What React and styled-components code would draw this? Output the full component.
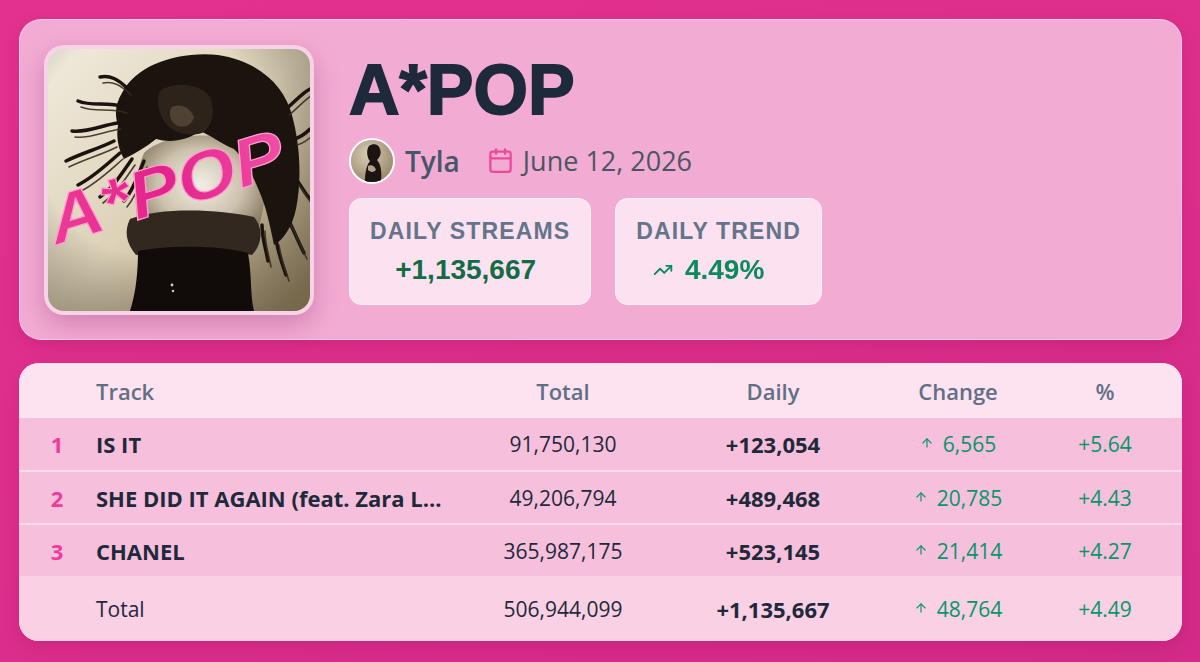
import React from 'react';
import styled, { createGlobalStyle } from 'styled-components';
import { Calendar, TrendingUp, ArrowUp } from 'lucide-react';

const GlobalStyle = createGlobalStyle`
  html, body { margin: 0; padding: 0; }
  body {
    background: #de2f8c;
    font-family: "Open Sans", "Liberation Sans", sans-serif;
  }
`;

const Page = styled.div`
  width: 1200px;
  height: 662px;
  box-sizing: border-box;
  padding: 19px 18px 21px 19px;
  display: flex;
  flex-direction: column;
  gap: 23px;
  background: linear-gradient(160deg, #e3318f 0%, #dc2e8c 55%, #d22a88 100%);
`;

const HeaderCard = styled.section`
  height: 321px;
  box-sizing: border-box;
  padding: 0 24px;
  display: flex;
  align-items: center;
  gap: 35px;
  background: #f2acd4;
  border: 1px solid rgba(255, 255, 255, 0.4);
  border-radius: 22px;
  box-shadow: 0 6px 16px rgba(140, 10, 70, 0.18);
`;

const Cover = styled.div`
  width: 270px;
  height: 270px;
  flex: none;
  box-sizing: border-box;
  padding: 4px;
  border-radius: 20px;
  background: #f6d3e6;
  box-shadow: 0 10px 26px rgba(130, 20, 80, 0.28);
  svg { display: block; border-radius: 16px; }
`;

const Info = styled.div`
  display: flex;
  flex-direction: column;
  align-items: flex-start;
`;

const Title = styled.h1`
  margin: 0;
  font-family: "Liberation Sans", Arial, sans-serif;
  font-weight: 900;
  font-size: 70px;
  line-height: 70px;
  color: #1e293b;
  -webkit-text-stroke: 1.8px #1e293b;
  letter-spacing: 0px;
`;

const Meta = styled.div`
  margin-top: 13px;
  display: flex;
  align-items: center;
  height: 46px;
`;

const Avatar = styled.div`
  width: 46px;
  height: 46px;
  box-sizing: border-box;
  border-radius: 50%;
  border: 2px solid #fff;
  overflow: hidden;
  flex: none;
  svg { display: block; }
`;

const Artist = styled.span`
  margin-left: 10px;
  font-size: 28px;
  font-weight: 600;
  color: #475569;
`;

const DateWrap = styled.span`
  margin-left: 27px;
  display: flex;
  align-items: center;
  gap: 9px;
  font-size: 27px;
  font-weight: 400;
  color: #4b5563;
  svg { color: #ec4899; }
`;

const Stats = styled.div`
  margin-top: 14px;
  display: flex;
  gap: 24px;
`;

const StatCard = styled.div`
  box-sizing: border-box;
  height: 107px;
  padding: 19px 20px 0;
  display: flex;
  flex-direction: column;
  align-items: center;
  gap: 8px;
  background: rgba(255, 240, 247, 0.78);
  border: 1px solid rgba(255, 255, 255, 0.5);
  border-radius: 13px;
  font-family: "Liberation Sans", Arial, sans-serif;
`;

const StatLabel = styled.div`
  font-size: 23px;
  line-height: 1.2;
  font-weight: 700;
  letter-spacing: 1.15px;
  color: #64748b;
`;

const StatValue = styled.div`
  display: flex;
  align-items: center;
  gap: 12px;
  padding-right: ${p => p.$shift || 0}px;
  font-size: 28px;
  line-height: 1.2;
  font-weight: 700;
  color: ${p => p.$color};
`;

const TableCard = styled.section`
  height: 278px;
  border-radius: 20px;
  overflow: hidden;
  background: #fde2ef;
  box-shadow: 0 6px 16px rgba(140, 10, 70, 0.18);
`;

const Row = styled.div`
  display: grid;
  grid-template-columns: 76px 363px 210px 210px 160px 134px;
  padding-right: 10px;
  align-items: center;
  box-sizing: border-box;
  height: ${p => p.$h}px;
  background: ${p => p.$bg};
  border-top: ${p => (p.$sep ? '2px solid #fbdcec' : 'none')};
  font-size: 21px;
`;

const HeadCell = styled.div`
  font-size: 22px;
  font-weight: 600;
  color: #5f6f86;
  text-align: ${p => (p.$left ? 'left' : 'center')};
  padding-left: ${p => (p.$left ? '1px' : '0')};
`;

const Rank = styled.div`
  text-align: center;
  font-size: 22px;
  font-weight: 700;
  color: #ef3b9b;
`;

const TrackName = styled.div`
  padding-left: 1px;
  font-size: ${p => (p.$bold ? 22 : 21)}px;
  font-weight: ${p => (p.$bold ? 700 : 400)};
  color: #1e293b;
  white-space: nowrap;
  overflow: hidden;
`;

const Num = styled.div`
  text-align: center;
  font-size: ${p => (p.$bold ? 22 : 21)}px;
  font-weight: ${p => (p.$bold ? 700 : 400)};
  color: ${p => (p.$green ? '#059669' : '#1e293b')};
  display: flex;
  justify-content: center;
  align-items: center;
  gap: 9px;
  svg { margin-top: -2px; }
`;

const strands = [
  'M76 58 C60 52 44 58 30 52',
  'M70 74 C54 76 40 84 24 82',
  'M66 92 C50 100 34 104 18 112',
  'M72 104 C58 116 46 128 30 136',
  'M84 110 C74 124 66 138 52 148',
  'M96 112 C90 126 86 140 76 152',
  'M80 40 C70 30 62 26 52 28',
  'M238 60 C248 52 254 44 262 40',
  'M246 90 C254 88 258 84 262 80',
  'M248 130 C254 138 258 146 262 150',
  'M240 170 C246 182 250 192 256 204',
  'M228 190 C230 204 234 214 238 226',
  'M214 176 C214 190 218 200 220 212',
];

function CoverArt() {
  return (
    <svg width="262" height="262" viewBox="0 0 262 262">
      <defs>
        <linearGradient id="bg" x1="0" y1="0" x2="1" y2="1">
          <stop offset="0" stopColor="#f1ebdd" />
          <stop offset="0.5" stopColor="#ddd2b8" />
          <stop offset="1" stopColor="#9a8a66" />
        </linearGradient>
        <radialGradient id="vig" cx="0.4" cy="0.35" r="0.8">
          <stop offset="0.55" stopColor="#000" stopOpacity="0" />
          <stop offset="1" stopColor="#3b2e1c" stopOpacity="0.4" />
        </radialGradient>
        <radialGradient id="skin" cx="0.5" cy="0.45" r="0.6">
          <stop offset="0" stopColor="#f3efe6" />
          <stop offset="0.55" stopColor="#cdc2ad" />
          <stop offset="1" stopColor="#7e705a" />
        </radialGradient>
        <linearGradient id="pink" x1="0" y1="0" x2="1" y2="0">
          <stop offset="0" stopColor="#ee3c98" />
          <stop offset="0.5" stopColor="#e2238a" />
          <stop offset="1" stopColor="#f14ea6" />
        </linearGradient>
      </defs>
      <rect width="262" height="262" fill="url(#bg)" />
      <rect width="262" height="262" fill="url(#vig)" />
      {/* torso */}
      <path d="M96 104 C112 88 150 84 176 88 C198 92 214 108 216 130 C218 152 214 172 206 190 L96 196 C86 170 84 132 96 104 Z" fill="url(#skin)" />
      {/* hair mass */}
      <path d="M74 44 C88 16 130 2 170 6 C210 12 236 36 244 66 C252 96 254 130 248 160 C244 178 236 190 226 196 C222 176 218 158 212 144 C204 124 196 110 186 100 C172 94 162 86 152 82 C138 92 122 94 108 90 C98 98 88 104 76 110 C70 100 68 88 70 76 C66 64 68 54 74 44 Z" fill="#1a130e" />
      <g stroke="#1a130e" strokeWidth="3.5" fill="none" strokeLinecap="round">
        {strands.map((d, i) => <path key={i} d={d} />)}
      </g>
      <g stroke="#3a2c20" strokeWidth="1.6" fill="none" strokeLinecap="round" opacity="0.9">
        {strands.map((d, i) => <path key={i} d={d} transform="translate(3 6)" />)}
      </g>
      <path d="M112 42 C126 32 152 34 162 48 C168 62 164 78 154 84 C140 88 124 84 116 72 C110 62 108 52 112 42 Z" fill="#2e231a" />
      <path d="M124 58 C132 54 142 58 146 68 C144 76 136 80 128 76 C122 72 120 64 124 58 Z" fill="#6d5c49" opacity="0.55" />
      {/* crossed arms */}
      <path d="M82 170 C112 158 170 160 206 168 C216 180 214 196 204 206 C166 198 120 200 88 206 C78 194 76 182 82 170 Z" fill="#33281f" />
      {/* skirt */}
      <path d="M90 202 C120 196 172 196 200 204 C204 226 202 246 206 262 L82 262 C88 244 90 222 90 202 Z" fill="#110c09" />
      <circle cx="124" cy="236" r="1.4" fill="#d8d0c0" />
      <circle cx="125" cy="242" r="1.2" fill="#d8d0c0" />
      {/* pink logo text */}
      <text
        x="8"
        y="196"
        transform="rotate(-17 8 196)"
        fontFamily="Liberation Sans, Arial, sans-serif"
        fontWeight="900"
        fontStyle="italic"
        fontSize="68"
        textLength="244"
        lengthAdjust="spacingAndGlyphs"
        fill="url(#pink)"
        stroke="#ff9fd0"
        strokeWidth="1.2"
      >
        A*POP
      </text>
    </svg>
  );
}

function AvatarArt() {
  return (
    <svg width="42" height="42" viewBox="0 0 42 42">
      <defs>
        <radialGradient id="av" cx="0.4" cy="0.35" r="0.8">
          <stop offset="0" stopColor="#d9ceb6" />
          <stop offset="1" stopColor="#8e7d60" />
        </radialGradient>
      </defs>
      <rect width="42" height="42" fill="url(#av)" />
      <path d="M18 6 C22 3 28 4 29 9 C31 14 28 18 26 20 C30 24 31 32 30 42 L14 42 C14 34 15 26 19 21 C16 18 15 10 18 6 Z" fill="#1b1410" />
      <path d="M17 26 C20 24 24 26 25 30 C22 33 19 32 17 30 Z" fill="#b3a488" />
    </svg>
  );
}

const rows = [
  { rank: 1, name: 'IS IT', total: '91,750,130', daily: '+123,054', change: '6,565', pct: '+5.64' },
  { rank: 2, name: 'SHE DID IT AGAIN (feat. Zara L...', total: '49,206,794', daily: '+489,468', change: '20,785', pct: '+4.43' },
  { rank: 3, name: 'CHANEL', total: '365,987,175', daily: '+523,145', change: '21,414', pct: '+4.27' },
];

export default function App() {
  return (
    <>
      <GlobalStyle />
      <Page>
        <HeaderCard>
          <Cover>
            <CoverArt />
          </Cover>
          <Info>
            <Title>A*POP</Title>
            <Meta>
              <Avatar>
                <AvatarArt />
              </Avatar>
              <Artist>Tyla</Artist>
              <DateWrap>
                <Calendar size={27} strokeWidth={2} />
                June 12, 2026
              </DateWrap>
            </Meta>
            <Stats>
              <StatCard>
                <StatLabel>DAILY STREAMS</StatLabel>
                <StatValue $color="#136c45" $shift={9}>+1,135,667</StatValue>
              </StatCard>
              <StatCard>
                <StatLabel>DAILY TREND</StatLabel>
                <StatValue $color="#0b8a5f" $shift={20}>
                  <TrendingUp size={20} strokeWidth={2.2} />
                  4.49%
                </StatValue>
              </StatCard>
            </Stats>
          </Info>
        </HeaderCard>

        <TableCard>
          <Row $h={55} $bg="#fde2ef">
            <div />
            <HeadCell $left>Track</HeadCell>
            <HeadCell>Total</HeadCell>
            <HeadCell>Daily</HeadCell>
            <HeadCell>Change</HeadCell>
            <HeadCell>%</HeadCell>
          </Row>
          {rows.map((r, i) => (
            <Row key={r.rank} $h={i === 0 ? 52 : 53} $bg="#f6c0dc" $sep={i > 0}>
              <Rank>{r.rank}</Rank>
              <TrackName $bold>{r.name}</TrackName>
              <Num>{r.total}</Num>
              <Num $bold>{r.daily}</Num>
              <Num $green>
                <ArrowUp size={14} strokeWidth={2} />
                {r.change}
              </Num>
              <Num $green>{r.pct}</Num>
            </Row>
          ))}
          <Row $h={65} $bg="#f9d0e4">
            <div />
            <TrackName>Total</TrackName>
            <Num>506,944,099</Num>
            <Num $bold>+1,135,667</Num>
            <Num $green>
              <ArrowUp size={14} strokeWidth={2} />
              48,764
            </Num>
            <Num $green>+4.49</Num>
          </Row>
        </TableCard>
      </Page>
    </>
  );
}
